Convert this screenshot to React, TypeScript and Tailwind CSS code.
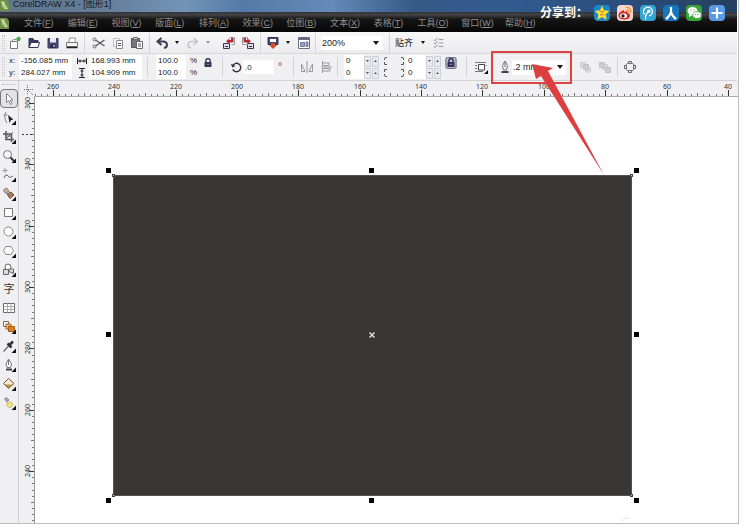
import type { ReactNode } from "react";

const UI_FONT = "font-['Liberation_Sans','Noto_Sans_CJK_SC',sans-serif]";

const menus: [string, string][] = [
  ["文件", "F"], ["编辑", "E"], ["视图", "V"], ["版面", "L"], ["排列", "A"], ["效果", "C"],
  ["位图", "B"], ["文本", "X"], ["表格", "T"], ["工具", "O"], ["窗口", "W"], ["帮助", "H"],
];

function Icon({ children, size = 14 }: { children: ReactNode; size?: number }) {
  return (
    <svg width={size} height={size} viewBox="0 0 14 14" fill="none" stroke="#666" strokeWidth="1" className="block shrink-0" aria-hidden="true">
      {children}
    </svg>
  );
}

function Tool({ label, width = "w-[19px]", children }: { label: string; width?: string; children: ReactNode }) {
  return (
    <button type="button" aria-label={label} className={`${width} flex h-5 shrink-0 items-center justify-center`}>
      {children}
    </button>
  );
}

function Drop({ faded = false, label }: { faded?: boolean; label: string }) {
  return (
    <button type="button" aria-label={label} className="flex h-5 w-3 shrink-0 items-center justify-center">
      <Caret faded={faded} small />
    </button>
  );
}

function Caret({ faded = false, small = false }: { faded?: boolean; small?: boolean }) {
  return (
    <svg width={small ? 4 : 6} height={small ? 3 : 4} viewBox="0 0 6 4" preserveAspectRatio="none" aria-hidden="true">
      <path d="M0 0h6L3 4z" fill={faded ? "#999" : "#111"} />
    </svg>
  );
}

function Sep() {
  return <div className="h-5 w-px shrink-0 bg-[#d4d4d6]" />;
}

function Grip({ tall = false }: { tall?: boolean }) {
  return <div className={`${tall ? "h-5" : "h-4"} w-[3px] shrink-0 border-x border-dotted border-[#c4c4c4]`} />;
}

function Field({ label, value, width }: { label: string; value: string; width: string }) {
  return (
    <input
      aria-label={label}
      defaultValue={value}
      className={`${width} h-3 min-w-0 shrink-0 bg-white px-0.5 text-[8px] leading-3 text-[#222] outline-none`}
    />
  );
}

function Spin({ label }: { label: string }) {
  return (
    <span className="flex h-[11px] gap-px">
      <button type="button" aria-label={`${label} -`} className="flex w-[7px] items-center justify-center border border-[#cfd0d8] bg-[#e9eaf1]">
        <svg width="3" height="2" viewBox="0 0 3 2"><path d="M0 0h3L1.5 2z" fill="#555" /></svg>
      </button>
      <button type="button" aria-label={`${label} +`} className="flex w-[7px] items-center justify-center border border-[#cfd0d8] bg-[#e9eaf1]">
        <svg width="3" height="2" viewBox="0 0 3 2"><path d="M0 2h3L1.5 0z" fill="#555" /></svg>
      </button>
    </span>
  );
}

function CornerPair({ side }: { side: "left" | "right" }) {
  return (
    <svg width="5" height="22" viewBox="0 0 5 22" fill="none" stroke="#555" aria-hidden="true" className={side === "right" ? "-scale-x-100" : ""}>
      <path d="M1.500 4V2.500Q1.500 1.500 3 1.500H4M1.500 6v2.500H4" />
      <path d="M4 13.500H1.500V16M1.500 18v1.500q0 1 1.500 1H4" />
    </svg>
  );
}

function Padlock({ boxed = false }: { boxed?: boolean }) {
  return (
    <Icon size={12}>
      {boxed && <rect x="1" y="0.500" width="12" height="13" rx="2" fill="#b9bad0" stroke="#55576e" />}
      <path d="M4.500 7V4.500a2.500 2.500 0 0 1 5 0V7" stroke="#2b2d50" strokeWidth="1.500" />
      <rect x="3.500" y="6.500" width="7" height="4.500" fill="#2b2d50" stroke="#2b2d50" />
      <path d="M5 8.500h4" stroke="#9a9cc0" />
    </Icon>
  );
}

function StandardBar() {
  return (
    <div className="flex h-[22px] items-center border-b border-[#d9d9db] bg-gradient-to-b from-[#f7f7f8] to-[#ececee] pl-0.5">
      <Grip />
      <Tool label="新建"><Icon><path d="M2.500 5.500h7v7h-7z" fill="#fff" stroke="#777" /><path d="M2.500 6.500l3-3h3" stroke="#888" /><circle cx="10.500" cy="3" r="2.200" fill="#4ca64c" stroke="none" /></Icon></Tool>
      <Tool label="打开"><Icon><path d="M2 11.500V2.500h4l1 2h4v2" fill="#3a3d5c" stroke="#34365a" /><path d="M2 11.500l2-5h8.500l-1.500 5z" fill="#fff" stroke="#34365a" /></Icon></Tool>
      <Tool label="保存"><Icon><path d="M2 2.500h10v9.500H2z" fill="#4a4d73" stroke="#32355c" /><path d="M4 2h6v4.500H4z" fill="#e8e9f2" stroke="none" /><path d="M4.500 8.500h5V12h-5z" fill="#25284a" stroke="none" /><path d="M8 9v2" stroke="#fff" /></Icon></Tool>
      <Tool label="打印"><Icon><path d="M4 6l.5-4h6L10 6" fill="#fff" stroke="#999" /><path d="M1.500 6.500h11v4h-11z" fill="#f4f4f4" stroke="#777" /><path d="M1.500 11.500h11" stroke="#222" strokeWidth="1.500" /></Icon></Tool>
      <div className="w-[3px]" /><Sep /><div className="w-1" />
      <Tool label="剪切"><Icon><path d="M3.500 4l9 6M3.500 10l9-6" strokeWidth="1.300" stroke="#555" /><circle cx="2.500" cy="3.500" r="1.500" /><circle cx="2.500" cy="10.500" r="1.500" /></Icon></Tool>
      <Tool label="复制"><Icon><path d="M2.500 2.500h6v8h-6z" fill="#fafafa" stroke="#bbb" /><path d="M5.500 4.500h6v8h-6z" fill="#fff" stroke="#888" /><path d="M7 7.500h3M7 9.500h3" stroke="#557" /></Icon></Tool>
      <Tool label="粘贴"><Icon><path d="M1.500 2.500h8v9h-8z" fill="#777" stroke="#555" /><path d="M3.500 1.500h4v2h-4z" fill="#ddd" /><path d="M6.500 5.500h6v7h-6z" fill="#fff" /><path d="M8 8h3M8 10h3" stroke="#557" /></Icon></Tool>
      <div className="w-[3px]" /><Sep /><div className="w-0.5" />
      <Tool label="撤消"><Icon><path d="M6.500 2L2.500 5.500l4 3.500M3 5.500h5q4 0 4 3.500 0 2.500-3 3" strokeWidth="2" stroke="#3d4052" /></Icon></Tool>
      <Drop label="撤消列表" />
      <Tool label="重做"><Icon><path d="M7.500 2l4 3.500-4 3.500M11 5.500H6Q2 5.500 2 9q0 2.500 3 3" strokeWidth="1.500" stroke="#c4c4c4" /></Icon></Tool>
      <Drop label="重做列表" faded />
      <div className="w-[5px]" />
      <Tool label="导入"><Icon><path d="M1.500 7.500h6v5h-6z" fill="#dcdde8" stroke="#33365a" /><path d="M3 10.500h3" stroke="#33365a" /><path d="M7.500 1.500h5v7h-3" fill="#fff" stroke="#999" /><path d="M11.500 2v4.500h-4V8L4 5.200 7.500 2.500V4H9V2z" fill="#b02a30" stroke="none" /></Icon></Tool>
      <Tool label="导出"><Icon><path d="M6.500 7.500h6v5h-6z" fill="#dcdde8" stroke="#33365a" /><path d="M8 10.500h3" stroke="#33365a" /><path d="M1.500 1.500h5v7h-5z" fill="#fff" stroke="#999" /><path d="M2.500 2v4.500h4V8L10 5.200 6.500 2.500V4H5V2z" fill="#b02a30" stroke="none" /></Icon></Tool>
      <div className="w-[3px]" /><Sep /><div className="w-0.5" />
      <Tool label="应用程序启动器"><Icon><path d="M2 1.500h10v7H2z" fill="#44476a" stroke="#33365a" /><path d="M4 3h6v3H4z" fill="#fff" stroke="none" /><path d="M5 7h4v2h2l-4 4-4-4h2z" fill="#d3502d" stroke="none" /></Icon></Tool>
      <Drop label="启动器列表" />
      <Tool label="欢迎屏幕"><Icon><path d="M1.500 1.500h11v11h-11z" fill="#fff" stroke="#6a6f8c" /><path d="M1.500 3h11" strokeWidth="2" stroke="#646989" /><path d="M3.500 6.500h4v4h-4zM9 6h2v4.500H9z" fill="#9da1bb" stroke="#757a99" /></Icon></Tool>
      <div className="w-0.5" /><Sep /><div className="w-[5px]" />
      <span className="relative flex items-center">
        <select aria-label="缩放级别" className="h-3.5 w-[62px] appearance-none bg-white pl-px text-[9px] leading-3 text-[#222] outline-none">
          <option>200%</option>
        </select>
        <span className="pointer-events-none absolute right-1"><Caret /></span>
      </span>
      <div className="w-1.5" /><Sep /><div className="w-[5px]" />
      <button type="button" className="text-[9px] leading-3 text-[#222]">贴齐</button>
      <div className="w-1" />
      <Drop label="贴齐列表" />
      <Tool label="选项"><Icon size={12}><path d="M1 3l1.500 1.500L5 1M1 7l1.500 1.500L5 5M1 11l1.500 1.500L5 9M6.500 3H12M6.500 7H12M6.500 11H12" stroke="#888" /></Icon></Tool>
    </div>
  );
}

function PropertyBar() {
  return (
    <div className="flex h-[27px] items-center border-b border-[#d3d3d5] bg-[#f0f0f2] pl-0.5 text-[8px] leading-3 text-[#222]">
      <Grip tall />
      <div className="ml-1 flex flex-col">
        <label className="flex items-center"><span className="w-[10px]">x:</span><Field label="x" value="-156.085 mm" width="w-[53px]" /></label>
        <label className="flex items-center"><span className="w-[10px]">y:</span><Field label="y" value="284.027 mm" width="w-[53px]" /></label>
      </div>
      <div className="ml-[5px] flex flex-col">
        <span className="flex h-3 items-center"><svg width="10" height="6" viewBox="0 0 10 6" stroke="#222" fill="none"><path d="M.5 0v6M9.500 0v6M1 3h8M3 1.500v3M7 1.500v3" /></svg></span>
        <span className="flex h-3 items-center pl-0.5"><svg width="6" height="10" viewBox="0 0 6 10" stroke="#222" fill="none"><path d="M0 .5h6M0 9.500h6M3 1v8M1.500 3h3M1.500 7h3" /></svg></span>
      </div>
      <div className="ml-0.5 flex flex-col">
        <Field label="宽度" value="168.993 mm" width="w-[53px]" />
        <Field label="高度" value="104.909 mm" width="w-[53px]" />
      </div>
      <div className="w-[5px]" /><Sep />
      <div className="ml-2 flex flex-col">
        <Field label="水平缩放" value="100.0" width="w-[30px]" />
        <Field label="垂直缩放" value="100.0" width="w-[30px]" />
      </div>
      <div className="ml-1 flex w-2 flex-col"><span>%</span><span>%</span></div>
      <div className="-mt-2"><Tool label="锁定比例"><Padlock /></Tool></div>
      <div className="w-[5px]" /><Sep /><div className="w-[7px]" />
      <Icon size={13}><path d="M3 5a4.500 4.500 0 1 1 0 4" strokeWidth="1.500" stroke="#333" /><path d="M1 3l1.500 4L6 5.500z" fill="#333" stroke="none" /></Icon>
      <input aria-label="旋转角度" defaultValue=".0" className="h-3.5 w-[31px] bg-white px-0.5 text-[8px] outline-none" />
      <span className="ml-1 text-[10px] text-[#555]">°</span>
      <div className="w-[11px]" /><Sep /><div className="w-[3px]" />
      <Tool label="水平镜像"><Icon><path d="M7 1v12M1.500 4v7.500h3.500zM12.500 4v7.500H9z" stroke="#999" /></Icon></Tool>
      <Tool label="垂直镜像"><Icon><path d="M2 7h11M3.500 1v4.500H10V3H4M3.500 13V8.500H11V11H4" stroke="#999" /></Icon></Tool>
      <div className="w-0.5" /><Sep />
      <div className="ml-1.5 flex flex-col">
        <Field label="左上圆角" value="0" width="w-5" />
        <Field label="左下圆角" value="0" width="w-5" />
      </div>
      <div className="flex flex-col gap-px"><Spin label="左上圆角" /><Spin label="左下圆角" /></div>
      <div className="ml-1 mr-px flex gap-3"><CornerPair side="left" /><CornerPair side="right" /></div>
      <div className="flex flex-col">
        <Field label="右上圆角" value="0" width="w-5" />
        <Field label="右下圆角" value="0" width="w-5" />
      </div>
      <div className="flex flex-col gap-px"><Spin label="右上圆角" /><Spin label="右下圆角" /></div>
      <div className="-mt-2"><Tool label="全部圆角"><Padlock boxed /></Tool></div>
      <div className="w-1.5" /><Sep /><div className="w-1" />
      <Tool label="段落文本换行"><Icon><path d="M1 2.500h11M1 5.500h2M1 8.500h2M1 11.500h8M11.500 5.500h1" stroke="#777" /><path d="M4.500 4.500h6v5.500h-6z" fill="#fff" stroke="#444" /><path d="M14 10v4h-4z" fill="#111" stroke="none" /></Icon></Tool>
      <div className="relative ml-2 flex items-center">
        <label htmlFor="outline" aria-label="轮廓宽度">
          <Icon><path d="M7 1L4.500 5.500 5.500 10h3l1-4.500zM7 2v5" stroke="#777" /><path d="M3.500 11h7v2h-7z" fill="#3d4058" stroke="none" /></Icon>
        </label>
        <select id="outline" className="h-[15px] w-[54px] appearance-none bg-white pl-px text-[9px] leading-3 text-[#222] outline-none">
          <option>.2 mm</option>
        </select>
        <span className="pointer-events-none absolute right-[3px]"><Caret /></span>
        <div className="pointer-events-none absolute -left-[7px] -right-1.5 -inset-y-[9px] z-20 border-2 border-[#dc4443]" />
        <svg className="pointer-events-none absolute left-8 -top-1 z-20" width="78" height="120" viewBox="0 0 78 120" aria-hidden="true">
          <path d="M2 8l4 15 5-3 63 99L18 15l5-3z" fill="#dc3f3f" />
        </svg>
      </div>
      <div className="w-2.5" />
      <Tool label="到图层前面"><Icon><path d="M1.500 2.500h5v5h-5zM6.500 8h5v4h-5z" fill="#ddd" stroke="#ccc" /><path d="M4.500 4.500h5v5h-5z" fill="#ccc" stroke="#c2c2c2" /></Icon></Tool>
      <Tool label="到图层后面"><Icon><path d="M4.500 4.500h5v5h-5z" fill="#ddd" stroke="#ccc" /><path d="M1.500 2.500h5v5h-5zM7.500 7.500h5v5h-5z" fill="#ccc" stroke="#c2c2c2" /></Icon></Tool>
      <div className="w-[3px]" /><Sep /><div className="w-0.5" />
      <Tool label="转换为曲线"><Icon><circle cx="7" cy="7" r="4.500" stroke="#777" /><path d="M5.500 1.500h3v2h-3zM5.500 10.500h3v2h-3zM1.500 5.500h2v3h-2zM10.500 5.500h2v3h-2z" fill="#eee" stroke="#666" /></Icon></Tool>
    </div>
  );
}

const flyout = <path d="M14 9.500V14H9.500z" fill="#111" stroke="none" />;

const toolbox: [string, ReactNode][] = [
  ["挑选", <path d="M4.500 1.500v9l2.300-2 1.700 4 1.500-.8-1.600-3.700h2.600z" fill="#fff" stroke="#888" />],
  ["形状", <><path d="M4 1Q1 6 5 12M1.500 4h4" stroke="#888" /><path d="M6 4l5.500 4.500L9 9l-1.500 3z" fill="#222" stroke="none" />{flyout}</>],
  ["裁剪", <><path d="M4 1v8.500h8M1 4h8.500v8" stroke="#555" strokeWidth="1.500" /><path d="M3 10L11 2M5 6h5" stroke="#666" />{flyout}</>],
  ["缩放", <><circle cx="5.500" cy="5.500" r="4" fill="#f5f5f5" stroke="#777" /><path d="M8.500 8.500L12 12" strokeWidth="2" stroke="#333" />{flyout}</>],
  ["手绘", <><path d="M3 0v5M.5 2.500h5" stroke="#999" /><path d="M2 10q2-5 4-2t5 0" stroke="#666" />{flyout}</>],
  ["智能填充", <><path d="M1.500 3l3-2 2.500 3-3.500 2.500z" fill="#c9b3a2" stroke="#857365" /><path d="M5 7l4-2 3 3-4 3.500z" fill="#aa795d" stroke="#705342" />{flyout}</>],
  ["矩形", <><path d="M2.500 2.500h8v8h-8z" fill="#fff" stroke="#777" />{flyout}</>],
  ["椭圆形", <><circle cx="6.500" cy="6.500" r="4.500" fill="#fff" stroke="#888" />{flyout}</>],
  ["多边形", <><path d="M4 2.500h5l2.500 4L9 10.500H4l-2.500-4z" fill="#fff" stroke="#888" />{flyout}</>],
  ["基本形状", <><circle cx="6" cy="4" r="3" fill="#fff" /><path d="M1.500 6.500h5v5h-5zM7 6h4.500v4.500L7 8.500z" fill="#ddd" stroke="#666" />{flyout}</>],
  ["文本", null],
  ["表格", <><path d="M1.500 2.500h11v9h-11z" fill="#fff" stroke="#666" /><path d="M1.500 5.500h11M1.500 8.500h11M5.500 2.500v9M9 2.500v9" stroke="#aaa" /></>],
  ["交互式调和", <><path d="M1.500 1.500h5v5h-5z" fill="#fff" stroke="#866" /><path d="M4 4h5v5H4z" fill="#e9b36a" stroke="#a4692f" /><path d="M6.500 6.500h6v5h-6z" fill="#d98224" stroke="#a75b15" />{flyout}</>],
  ["滴管", <><path d="M1.500 12.500l5.500-6" stroke="#777" strokeWidth="1.500" /><path d="M5.500 4.500l4 4M7 6.500l4-4" stroke="#333" strokeWidth="2.500" />{flyout}</>],
  ["轮廓", <><path d="M6.500 1L4 6l1 3.500h3.500L9.500 6zM6.500 2v5" fill="#fff" stroke="#777" /><path d="M4 11.500h6" stroke="#444" strokeWidth="2" />{flyout}</>],
  ["填充", <><path d="M1.500 6.500l5-5 5.500 5-5.500 5z" fill="#f6e9ce" stroke="#665440" /><path d="M3 7.500h8l-4.500 4z" fill="#b98b43" stroke="none" />{flyout}</>],
  ["交互式填充", <><path d="M2.500 3l2-1.500L7 4 5 6z" fill="#aaa" stroke="#888" /><path d="M5 7l4-1 2 3-3 3-3-2z" fill="#f1e47d" stroke="#cdbd62" />{flyout}</>],
];

function Toolbox() {
  return (
    <div role="toolbar" className="flex w-[19px] shrink-0 flex-col border-r border-[#cfcfd2] bg-[#f0eff2]">
      <div className="mx-0.5 mb-1 mt-[3px] h-px border-t border-dotted border-[#bbb]" />
      {toolbox.map(([name, drawing], i) => (
        <button
          key={name}
          type="button"
          aria-label={name}
          className={`flex h-[19px] w-[18px] shrink-0 items-center justify-center ${i === 0 ? "rounded-sm border border-[#777] bg-[#e3e3e6]" : ""}`}
        >
          {drawing ? <Icon>{drawing}</Icon> : <span className="text-[11px] leading-3 text-[#333]">字</span>}
        </button>
      ))}
    </div>
  );
}

const UNIT = 61.35;

function ticks(start: number, end: number, origin: number) {
  const list: { at: number; major: boolean; mid: boolean }[] = [];
  for (let n = -10; n < 130; n++) {
    const at = origin + (n * UNIT) / 10;
    if (at > start && at < end) list.push({ at: Math.round(at), major: n % 10 === 0, mid: n % 5 === 0 });
  }
  return list;
}

function TopRuler() {
  return (
    <svg className="block h-4 w-full bg-[#f0f0f2] font-['Noto_Sans',sans-serif] text-[7px]" aria-label="水平标尺">
      <g stroke="#777" fill="none">
        <path d="M8.500 4v9M5 8.500h9M9 9l5 5" strokeDasharray="1 1" />
        {ticks(15, 714, 34).map((t) => (
          <path key={t.at} d={`M${t.at + 0.5} ${t.major ? 9 : t.mid ? 12 : 13}V15`} stroke={t.major ? "#333" : "#777"} />
        ))}
        <path d="M15 15.500H719" stroke="#aaa" />
      </g>
      {Array.from({ length: 12 }, (_, i) => (
        <text key={i} x={Math.round(34 + i * UNIT)} y="8" textAnchor="middle" fill="#333">{260 - i * 20}</text>
      ))}
    </svg>
  );
}

function SideRuler() {
  return (
    <svg className="block w-4 shrink-0 self-stretch overflow-visible bg-[#f0f0f2] font-['Noto_Sans',sans-serif] text-[7px]" aria-label="垂直标尺">
      <g stroke="#777" fill="none">
        {ticks(0, 424, 6).map((t) => (
          <path key={t.at} d={`M${t.major ? 10 : t.mid ? 12 : 13} ${t.at + 0.5}H15`} stroke={t.major ? "#333" : "#777"} />
        ))}
        <path d="M15.500 0V426" stroke="#999" />
        <path d="M3 37.500h11" stroke="#333" strokeDasharray="2 2" />
      </g>
      {Array.from({ length: 7 }, (_, i) => {
        const y = Math.round(6 + i * UNIT);
        return <text key={i} x="11" y={y} transform={`rotate(-90 11 ${y})`} textAnchor="middle" fill="#333">{360 - i * 20}</text>;
      })}
    </svg>
  );
}

const handles = [
  "-left-2 -top-2", "left-1/2 -ml-1 -top-2", "-right-2 -top-2",
  "-left-2 top-1/2 -mt-1", "-right-2 top-1/2 -mt-1",
  "-left-2 -bottom-2", "left-1/2 -ml-1 -bottom-2", "-right-2 -bottom-2",
];
const nodes = ["-left-0.5 -top-0.5", "-right-0.5 -top-0.5", "-left-0.5 -bottom-0.5", "-right-0.5 -bottom-0.5"];

function Canvas() {
  return (
    <main className="relative h-[426px] flex-1 overflow-hidden bg-white">
      <div className="absolute left-[78px] top-[78px] h-[321px] w-[519px] border border-[#555250] bg-[#3a3633]">
        {handles.map((h) => <i key={h} className={`absolute size-[5px] bg-black ${h}`} />)}
        {nodes.map((n) => <i key={n} className={`absolute size-[3px] border border-[#444] bg-[#ccc] ${n}`} />)}
        <svg className="absolute left-1/2 top-1/2 -ml-1 -mt-1" width="6" height="6" viewBox="0 0 6 6" stroke="#ddd" strokeWidth="1.500"><path d="M.5.5l5 5M5.500.5l-5 5" /></svg>
      </div>
      <svg className="absolute bottom-0 left-[586px]" width="10" height="7" viewBox="0 0 10 7" fill="none" stroke="#ddd"><path d="M1 5q3-4 7-3" /></svg>
    </main>
  );
}

const shareTargets: [string, string, ReactNode][] = [
  ["QQ空间", "bg-[#1687c9]", <><path d="M8 1l2 4.500 5 .5-3.500 3.500 1 5L8 12l-4.500 2.500 1-5L1 6l5-.5z" fill="#ffe23b" stroke="#e5c824" strokeWidth=".5" /><path d="M5.500 6.500h4.500L6 10h4.500" fill="none" stroke="#d8872a" /></>],
  ["新浪微博", "bg-[#f8d5cd]", <><path d="M7 5Q1 7 1.500 11q1 4 6.500 3.500 5-.5 5-4Q13 8 10.500 8 11 5 7 7z" fill="#d42b25" /><ellipse cx="6.500" cy="10.800" rx="3.500" ry="2.500" fill="#fff" /><circle cx="6" cy="11" r="1.700" fill="#222" /><path d="M9 2.500q5-.5 5 5M9.500 5q2.500 0 2.500 2.500" fill="none" stroke="#e99b33" strokeWidth="1.300" /></>],
  ["腾讯微博", "bg-[#35a5cf]", <><path d="M4.500 9.500A4.500 4.500 0 1 1 9 11" fill="none" stroke="#fff" strokeWidth="1.200" /><path d="M5.500 14.500Q5 10 8 7" fill="none" stroke="#fff" strokeWidth="1.200" /><circle cx="8.800" cy="6.300" r="1.700" fill="#fff" /></>],
  ["人人网", "bg-[#1675b8]", <path d="M8 2v5Q7 11 3 14M8 7q1 4 5 7" fill="none" stroke="#fff" strokeWidth="2.200" />],
  ["微信", "bg-[#37a637]", <><ellipse cx="6.500" cy="6" rx="5" ry="4" fill="#fff" /><path d="M3 8l0 4 4-2z" fill="#fff" /><ellipse cx="11" cy="10" rx="4.200" ry="3.400" fill="#fff" stroke="#37a637" strokeWidth=".7" /><path d="M5 4.500v1M8 4.500v1M9.500 9v1M12 9v1" stroke="#37a637" /></>],
  ["更多", "bg-[#5a9ae4]", <path d="M8 2.500v11M2.500 8h11" stroke="#fff" strokeWidth="2" />],
];

function ShareBar() {
  return (
    <div className="absolute right-[13px] top-[5px] z-10 flex items-center">
      <span className="w-[54px] whitespace-nowrap text-[12px] font-bold leading-4 text-white">分享到：</span>
      <div className="flex gap-[7px]">
        {shareTargets.map(([name, tone, glyph]) => (
          <a key={name} href="#" aria-label={name} className={`block size-4 rounded-sm ${tone}`}>
            <svg viewBox="0 0 16 16" className="size-4">{glyph}</svg>
          </a>
        ))}
      </div>
    </div>
  );
}

function Balloon() {
  return (
    <svg width="10" height="11" viewBox="0 0 10 11" className="shrink-0" aria-hidden="true">
      <path d="M0 0h7l2 3v8H0z" fill="#6f9144" />
      <path d="M1 1.500q4-1 4 2T3 8zM5 4l3 5H4z" fill="#c5d6a4" />
    </svg>
  );
}

export default function App() {
  return (
    <div className={`min-h-screen bg-white pr-[7px] ${UI_FONT}`}>
      <div className="relative border-b border-r border-[#bdbdbd]">
        <header className="mr-px">
          <div className="flex h-3.5 items-start gap-[3px] border-b-2 border-[#35383e] bg-[linear-gradient(90deg,#60758b_0%,#647d98_14%,#7393b7_25%,#547aa8_33%,#638ab8_45%,#365b89_56%,#315a8e_70%,#2a4d7a_85%,#263f60_100%)]">
            <Balloon />
            <h1 className="text-[9px] font-normal leading-[9px] text-[#141a22]">CorelDRAW X4 - [图形1]</h1>
          </div>
          <nav className="flex h-[18px] items-center bg-gradient-to-b from-[#4a4a4a] via-[#151515] via-30% to-[#070707]">
            <div className="flex w-6 items-center"><Balloon /></div>
            <div className="flex w-[511px] justify-between">
              {menus.map(([name, key]) => (
                <button key={key} type="button" className="w-[30px] whitespace-nowrap text-left text-[9px] leading-4 text-[#8e8e8e]">
                  {name}(<u>{key}</u>)
                </button>
              ))}
            </div>
          </nav>
          <StandardBar />
          <PropertyBar />
        </header>
        <div className="flex">
          <Toolbox />
          <div className="min-w-0 flex-1">
            <TopRuler />
            <div className="flex">
              <SideRuler />
              <Canvas />
            </div>
          </div>
        </div>
        <ShareBar />
      </div>
    </div>
  );
}
